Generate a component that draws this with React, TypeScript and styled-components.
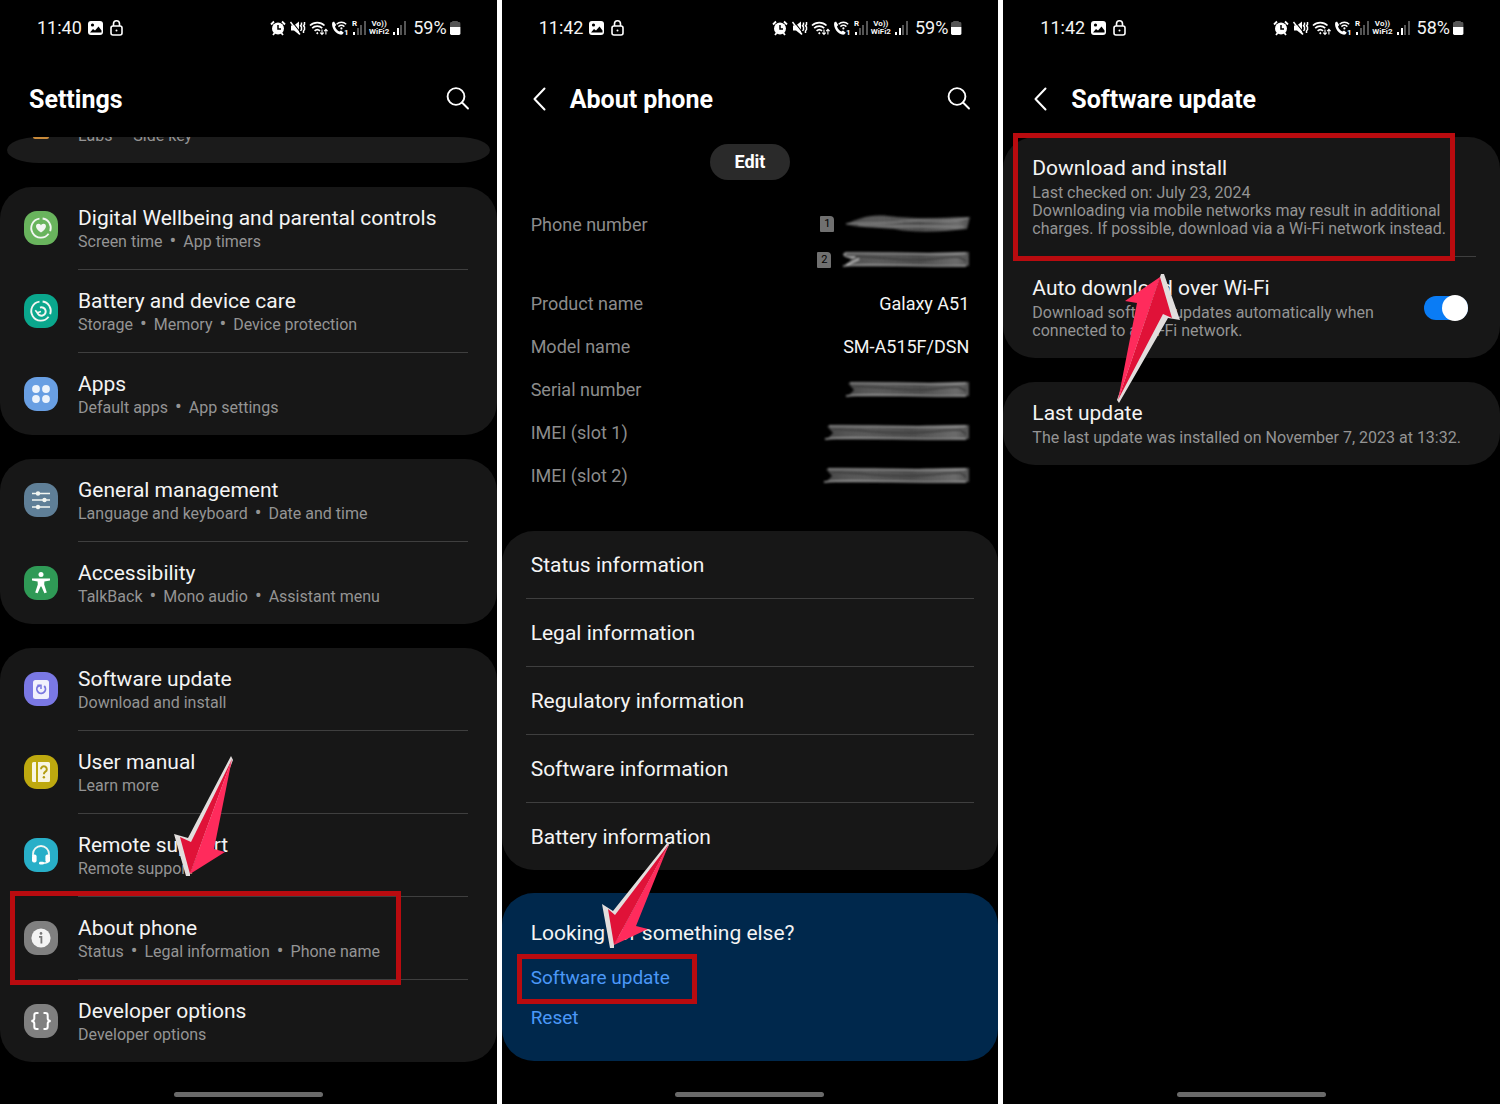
import React from "react";
import styled, { createGlobalStyle } from "styled-components";

const GlobalStyle = createGlobalStyle`
  *, *::before, *::after { box-sizing: border-box; }
  body {
    margin: 0;
    background: #fff;
    font-family: Roboto, "Noto Sans", sans-serif;
    color: #f4f4f4;
  }
  h1, h2, p, dl, dt, dd, ul { margin: 0; padding: 0; font-weight: 400; }
  ul { list-style: none; }
  svg { display: block; flex: none; }
`;

/* ---------- shell ---------- */

const Gallery = styled.div`
  display: grid;
  grid-template-columns: repeat(3, minmax(0, 1fr));
  gap: 5px;
  min-height: 100vh;
`;

const Phone = styled.section`
  display: flex;
  flex-direction: column;
  background: #000;
  min-width: 0;
`;

const Body = styled.main<{ $gap: number }>`
  flex: 1;
  display: flex;
  flex-direction: column;
  gap: ${(p) => p.$gap}px;
`;

const NavBar = styled.footer`
  display: flex;
  justify-content: center;
  padding: 0 0 7px;
`;

const NavPill = styled.span`
  width: 30%;
  height: 5px;
  border-radius: 3px;
  background: #6a6a6a;
`;

/* ---------- status bar ---------- */

const StatusRow = styled.div`
  display: flex;
  align-items: center;
  justify-content: space-between;
  height: 56px;
  padding: 0 35px 0 37px;
`;

const StatusGroup = styled.div<{ $gap: number }>`
  display: flex;
  align-items: center;
  gap: ${(p) => p.$gap}px;
`;

const Clock = styled.time`
  font-size: 18px;
  line-height: 24px;
`;

const Percent = styled.span`
  margin-left: 4px;
  margin-right: -2px;
  font-size: 18px;
  line-height: 24px;
`;

const Carrier = styled.span`
  display: flex;
  flex-direction: column;
  align-items: center;
  font-size: 8px;
  line-height: 8px;
  font-weight: 700;
`;

const Signal = ({ roaming }: { roaming?: boolean }) => (
  <svg width="14" height="16" viewBox="0 0 14 16">
    {roaming && (
      <text x="0" y="6" fontSize="8" fontWeight="700" fill="#fff">R</text>
    )}
    <rect x="1" y="12" width="2" height="3" fill="#fff" />
    <rect x="5" y="8" width="2" height="7" fill={roaming ? "#555" : "#fff"} />
    <rect x="8" y="5" width="2" height="10" fill="#555" />
    <rect x="12" y="1" width="2" height="14" fill="#555" />
  </svg>
);

const StatusBar = ({ time, battery }: { time: string; battery: string }) => (
  <StatusRow>
    <StatusGroup $gap={6}>
      <Clock>{time}</Clock>
      <svg width="16" height="16" viewBox="0 0 16 16">
        <rect x="0" y="1" width="15" height="14" rx="3" fill="#fff" />
        <circle cx="4.5" cy="5" r="1.6" fill="#000" />
        <path d="M2 12.5 L5 9 L7 10.5 L10.5 6.5 L13.5 10.5 V12.5 Z" fill="#000" />
      </svg>
      <svg width="13" height="16" viewBox="0 0 13 16" fill="none" stroke="#fff" strokeWidth="1.6">
        <rect x="1" y="6" width="11" height="9" rx="2" />
        <path d="M3.5 6 V3.8 a3 3 0 0 1 6 0 V6" />
        <circle cx="6.5" cy="10.5" r="1" fill="#fff" stroke="none" />
      </svg>
    </StatusGroup>
    <StatusGroup $gap={3}>
      <svg width="16" height="16" viewBox="0 0 16 16">
        <circle cx="8" cy="8.5" r="6" fill="#fff" />
        <path d="M1 4.5 L4 1.5 M15 4.5 L12 1.5 M3 15 l1.6 -2 M13 15 l-1.6 -2" stroke="#fff" strokeWidth="1.8" />
        <path d="M8 5 V9 H11" stroke="#000" strokeWidth="1.5" fill="none" />
      </svg>
      <svg width="17" height="16" viewBox="0 0 17 16">
        <path d="M2 5.5 H5 L10 1.5 V14.5 L5 10.5 H2 Z" fill="#fff" />
        <path d="M2.500 1 L12 13" stroke="#000" strokeWidth="1.200" />
        <path d="M1.500 2 L11 14.500" stroke="#fff" strokeWidth="1.400" />
        <path d="M12.500 2.500 v2 l-1 1.300 l1 1.300 v2.500 l-1 1.300 M15.500 2 v2.500 l-1 1.300 l1 1.300 v2.500 l-1 1.300 v2" stroke="#fff" strokeWidth="1.500" fill="none" />
      </svg>
      <svg width="19" height="16" viewBox="0 0 19 16" fill="none" stroke="#fff" strokeWidth="1.7">
        <path d="M1 5.5 a10.5 10.5 0 0 1 14.5 0 M3.2 8.2 a7 7 0 0 1 10 0 M5.6 10.8 a4 4 0 0 1 5.4 0" />
        <path d="M8.3 11.8 l1.2 1.4 l-1.2 1.2 l-1.2 -1.2 z" fill="#fff" stroke="none" />
        <path d="M13 9.5 V14 M11.3 12.6 L13 14.4 L14.7 12.6 M16.9 14.5 V9.6 M15.2 11.2 L16.9 9.4 L18.6 11.2" strokeWidth="1.1" />
      </svg>
      <svg width="18" height="16" viewBox="0 0 18 16">
        <path d="M1.2 2.6 L3 1.4 L5.2 5 L4 6.6 C4.8 9 6.4 10.6 8.4 11.6 L10 10.4 L12.8 12.8 L11.2 14.6 C6 15.6 0 8.8 1.2 2.6 Z" fill="#fff" />
        <path d="M5.6 4.2 a7 7 0 0 1 9.6 0 M7.4 6.6 a4.6 4.6 0 0 1 6 0" fill="none" stroke="#fff" strokeWidth="1.4" />
        <circle cx="10.4" cy="8.4" r="1.1" fill="#fff" />
        <text x="13" y="15" fontSize="8" fontWeight="700" fill="#fff">1</text>
      </svg>
      <Signal roaming />
      <Carrier>
        <span>Vo))</span>
        <span>WiFi2</span>
      </Carrier>
      <Signal />
      <Percent>{battery}</Percent>
      <svg width="14" height="16" viewBox="0 0 14 16">
        <path d="M4 2 a1 1 0 0 1 1 -1 h4 a1 1 0 0 1 1 1 h1 a1.4 1.4 0 0 1 1.4 1.4 V7 H2 V3.4 A1.4 1.4 0 0 1 3.400 2 Z" fill="#555" />
        <path d="M2 7 H12.400 V13.600 A1.4 1.4 0 0 1 11 15 H3.400 A1.4 1.4 0 0 1 2 13.600 Z" fill="#fff" />
      </svg>
    </StatusGroup>
  </StatusRow>
);

/* ---------- title bar ---------- */

const TitleBar = styled.header<{ $back?: boolean }>`
  display: flex;
  align-items: center;
  gap: 20px;
  height: 81px;
  padding: 5px 27px 0 ${(p) => (p.$back ? 26 : 29)}px;
`;

const Title = styled.h1`
  flex: 1;
  padding-top: 2px;
  font-size: 25px;
  line-height: 32px;
  font-weight: 700;
  color: #fff;
`;

const IconButton = styled.button`
  display: flex;
  padding: 0;
  border: 0;
  background: none;
  color: #fff;
`;

const Header = ({ title, back, search }: { title: string; back?: boolean; search?: boolean }) => (
  <TitleBar $back={back}>
    {back && (
      <IconButton type="button" aria-label="Back">
        <svg width="22" height="24" viewBox="0 0 22 24" fill="none" stroke="currentColor" strokeWidth="2" strokeLinecap="round" strokeLinejoin="round">
          <path d="M16.500 1.500 L6.500 12 L16.500 22.500" />
        </svg>
      </IconButton>
    )}
    <Title>{title}</Title>
    {search && (
      <IconButton type="button" aria-label="Search">
        <svg width="24" height="24" viewBox="0 0 24 24" fill="none" stroke="currentColor" strokeWidth="1.900" strokeLinecap="round">
          <circle cx="10" cy="9.500" r="8.400" />
          <path d="M16 15.500 L22 21.500" />
        </svg>
      </IconButton>
    )}
  </TitleBar>
);

/* ---------- cards and rows ---------- */

const Card = styled.ul`
  border-radius: 32px;
  background: #171717;
`;

const Rule = styled.li<{ $left: number; $right: number }>`
  height: 1px;
  margin: 0 ${(p) => p.$right}px 0 ${(p) => p.$left}px;
  background: #3f3f3f;
`;

const RowItem = styled.li`
  position: relative;
`;

const SettingLink = styled.a`
  display: flex;
  align-items: center;
  gap: 20px;
  height: 82px;
  padding: 0 24px;
  color: inherit;
  text-decoration: none;
`;

const Texts = styled.span`
  display: flex;
  flex-direction: column;
  padding-top: 2px;
`;

const RowTitle = styled.span`
  font-size: 21px;
  line-height: 26px;
`;

const RowSub = styled.span`
  font-size: 16px;
  line-height: 22px;
  color: #949494;
`;

const Bullet = styled.span`
  margin: 0 7px;
  font-size: 20px;
  line-height: 16px;
`;

const Tile = styled.span<{ $color: string }>`
  display: flex;
  align-items: center;
  justify-content: center;
  flex: none;
  width: 34px;
  height: 34px;
  border-radius: 13px;
  background: ${(p) => p.$color};
`;

const PeekClip = styled.div`
  height: 26px;
  margin: 0 7px;
  padding: 0 17px;
  border-radius: 32px / 13px;
  background: #1b1b1b;
`;

const PeekRow = styled.div`
  display: flex;
  align-items: flex-end;
  gap: 20px;
  height: 10px;
  overflow: hidden;
`;

const PeekDot = styled.span`
  align-self: flex-start;
  width: 16px;
  height: 2px;
  margin: 0 9px;
  border-radius: 0 0 8px 8px;
  background: #c98a3a;
`;

/* ---------- annotations ---------- */

type BoxProps = { $top: number; $left: number; $width: number; $height: number };

const Outline = styled.span<BoxProps>`
  position: absolute;
  z-index: 1;
  top: ${(p) => p.$top}px;
  left: ${(p) => p.$left}px;
  width: ${(p) => p.$width}px;
  height: ${(p) => p.$height}px;
  border: 5px solid #b90b0f;
  pointer-events: none;
`;

const ArrowSvg = styled.svg<{ $top: number; $left: number }>`
  position: absolute;
  z-index: 2;
  top: ${(p) => p.$top}px;
  left: ${(p) => p.$left}px;
  pointer-events: none;
`;

type ArrowProps = {
  top: number;
  left: number;
  width: number;
  height: number;
  edge: string;
  dark: string;
  light: string;
};

const Arrow = ({ top, left, width, height, edge, dark, light }: ArrowProps) => (
  <ArrowSvg $top={top} $left={left} width={width} height={height} viewBox={`0 0 ${width} ${height}`} aria-hidden="true">
    <polygon points={edge} fill="#e2dedd" />
    <polygon points={dark} fill="#e01238" />
    <polygon points={light} fill="#ff2b5c" />
  </ArrowSvg>
);

/* ---------- settings glyphs ---------- */

const Glyph = ({ children }: { children: React.ReactNode }) => (
  <svg width="34" height="34" viewBox="0 0 34 34" fill="none" stroke="#f2f6f2" strokeWidth="1.800" aria-hidden="true">
    {children}
  </svg>
);

const ring = <path d="M15.500 7.600 A9.600 9.600 0 1 0 24.600 22.800 M18.600 7.500 A9.600 9.600 0 0 1 26.200 20.200" />;

const glyphs = {
  wellbeing: (
    <Glyph>
      {ring}
      <path d="M17 21.500 C10.500 17.800 11.200 12.800 14.400 12.800 C16 12.800 16.700 13.800 17 14.400 C17.300 13.800 18 12.800 19.600 12.800 C22.800 12.800 23.500 17.800 17 21.500 Z" fill="#f2f6f2" stroke="none" />
    </Glyph>
  ),
  care: (
    <Glyph>
      {ring}
      <path d="M16 13.600 A4.200 4.200 0 1 1 13.400 18.400" strokeWidth="2" />
      <path d="M11.300 16.200 L13.300 18.800 L17 17.600" strokeWidth="1.600" />
    </Glyph>
  ),
  apps: (
    <Glyph>
      <g fill="#eef4fc" stroke="none">
        <circle cx="12" cy="12" r="3.900" />
        <circle cx="22" cy="12" r="3.900" />
        <circle cx="12" cy="22" r="3.900" />
        <circle cx="22" cy="22" r="3.900" />
      </g>
    </Glyph>
  ),
  general: (
    <Glyph>
      <path d="M8 10.500 H26 M8 17 H26 M8 24 H26" strokeWidth="1.600" />
      <g fill="#f2f6f2" stroke="none">
        <circle cx="14" cy="10.500" r="2.200" />
        <circle cx="20.500" cy="17" r="2.200" />
        <circle cx="14" cy="24" r="2.200" />
      </g>
    </Glyph>
  ),
  access: (
    <Glyph>
      <circle cx="17" cy="8.500" r="2.500" fill="#fff" stroke="none" />
      <path d="M8 12.600 H26 V14.600 L20.400 15.600 L20.200 18.500 L22.800 26.400 L20.400 27.200 L17.400 20.500 H16.600 L13.600 27.200 L11.200 26.400 L13.800 18.500 L13.600 15.600 L8 14.600 Z" fill="#fff" stroke="none" />
    </Glyph>
  ),
  update: (
    <Glyph>
      <rect x="9" y="8" width="16" height="19" rx="2.500" fill="#f1f1fc" stroke="none" />
      <path d="M20.200 14 A4.300 4.300 0 1 1 13.600 14.600 L16 13.600" stroke="#7a78e0" />
      <path d="M13.400 13.200 H17 V17" stroke="#7a78e0" strokeWidth="1.500" />
    </Glyph>
  ),
  manual: (
    <Glyph>
      <path d="M8 8.500 a1.500 1.500 0 0 1 1.500 -1.500 H12 V27 H9.500 A1.500 1.500 0 0 1 8 25.500 Z M14 7 H24.500 A1.500 1.500 0 0 1 26 8.500 V25.500 A1.500 1.500 0 0 1 24.500 27 H14 Z" fill="#f8f5e0" stroke="none" />
      <path d="M17 14.200 a2.900 2.900 0 1 1 4.400 2.500 c-1.200 .7 -1.500 1.200 -1.500 2.500" stroke="#b39d10" strokeWidth="2" />
      <circle cx="19.900" cy="22.200" r="1.200" fill="#b39d10" stroke="none" />
    </Glyph>
  ),
  remote: (
    <Glyph>
      <path d="M9 18 V16 a8 8 0 0 1 16 0 V18 M24.500 22 c0 2 -2 3.200 -5.500 3.200" />
      <rect x="8" y="16.500" width="4.600" height="8" rx="2" fill="#fff" stroke="none" />
      <rect x="21.400" y="16.500" width="4.600" height="8" rx="2" fill="#fff" stroke="none" />
      <rect x="15" y="23.800" width="5" height="2.800" rx="1.400" fill="#fff" stroke="none" />
    </Glyph>
  ),
  about: (
    <Glyph>
      <circle cx="17" cy="17" r="9.600" fill="#f3f3f3" stroke="none" />
      <circle cx="17" cy="12.400" r="1.300" fill="#777" stroke="none" />
      <path d="M15 15.800 H17.400 V22.600" stroke="#777" />
    </Glyph>
  ),
  developer: (
    <Glyph>
      <g stroke="#fff" strokeWidth="2">
        <path d="M14.500 9 H12.500 Q10.300 9 10.300 11.200 V14.500 Q10.300 16.400 7.500 17 Q10.300 17.600 10.300 19.500 V22.800 Q10.300 25 12.500 25 H14.500" />
        <path d="M19.500 9 H21.500 Q23.700 9 23.700 11.200 V14.500 Q23.700 16.400 26.500 17 Q23.700 17.600 23.700 19.500 V22.800 Q23.700 25 21.500 25 H19.500" />
      </g>
    </Glyph>
  ),
};

type Setting = { title: string; sub: string[]; color: string; icon: keyof typeof glyphs; marked?: boolean };

const settingGroups: Setting[][] = [
  [
    { title: "Digital Wellbeing and parental controls", sub: ["Screen time", "App timers"], color: "#69b45d", icon: "wellbeing" },
    { title: "Battery and device care", sub: ["Storage", "Memory", "Device protection"], color: "#0aa78d", icon: "care" },
    { title: "Apps", sub: ["Default apps", "App settings"], color: "#699fe3", icon: "apps" },
  ],
  [
    { title: "General management", sub: ["Language and keyboard", "Date and time"], color: "#5f7f97", icon: "general" },
    { title: "Accessibility", sub: ["TalkBack", "Mono audio", "Assistant menu"], color: "#2f9a56", icon: "access" },
  ],
  [
    { title: "Software update", sub: ["Download and install"], color: "#7a78e4", icon: "update" },
    { title: "User manual", sub: ["Learn more"], color: "#bea90f", icon: "manual" },
    { title: "Remote support", sub: ["Remote support"], color: "#28afc8", icon: "remote" },
    { title: "About phone", sub: ["Status", "Legal information", "Phone name"], color: "#808080", icon: "about", marked: true },
    { title: "Developer options", sub: ["Developer options"], color: "#808080", icon: "developer" },
  ],
];

const Joined = ({ parts }: { parts: string[] }) => (
  <>
    {parts.map((part, i) => (
      <React.Fragment key={part}>
        {i > 0 && <Bullet>•</Bullet>}
        {part}
      </React.Fragment>
    ))}
  </>
);

const SettingsScreen = () => (
  <Phone>
    <StatusBar time="11:40" battery="59%" />
    <Header title="Settings" search />
    <Body $gap={24}>
      <PeekClip>
        <PeekRow>
          <PeekDot />
          <RowSub><Joined parts={["Labs", "Side key"]} /></RowSub>
        </PeekRow>
      </PeekClip>
      {settingGroups.map((group) => (
        <Card key={group[0].title}>
          {group.map((s, i) => (
            <React.Fragment key={s.title}>
              {i > 0 && <Rule role="presentation" $left={78} $right={29} />}
              <RowItem>
                <SettingLink href="#">
                  <Tile $color={s.color}>{glyphs[s.icon]}</Tile>
                  <Texts>
                    <RowTitle>{s.title}</RowTitle>
                    <RowSub><Joined parts={s.sub} /></RowSub>
                  </Texts>
                </SettingLink>
                {s.marked && (
                  <>
                    <Outline $top={-6} $left={10} $width={391} $height={94} />
                    <Arrow
                      top={-141}
                      left={174}
                      width={60}
                      height={120}
                      edge="57,0 59,4 16,118 16,120 12,120 0,78 14,82"
                      dark="58,3 16,118 6,81 17,86"
                      light="58,3 40,93 51,96 16,118"
                    />
                  </>
                )}
              </RowItem>
            </React.Fragment>
          ))}
        </Card>
      ))}
    </Body>
    <NavBar><NavPill /></NavBar>
  </Phone>
);

/* ---------- about phone ---------- */

const EditButton = styled.button`
  align-self: center;
  height: 36px;
  margin: 7px 0 23px;
  padding: 0 25px;
  border: 0;
  border-radius: 18px;
  background: #2a2a2a;
  color: #fff;
  font: 700 18px/24px Roboto, "Noto Sans", sans-serif;
`;

const Facts = styled.dl`
  padding: 0 29px;
  margin-bottom: 34px;
`;

const Fact = styled.div`
  display: flex;
  justify-content: space-between;
  font-size: 18px;
  line-height: 43px;
`;

const FactName = styled.dt`
  color: #8c8c8c;
`;

const FactValue = styled.dd`
  display: flex;
  flex-direction: column;
  align-items: flex-end;
`;

const SimLines = styled(FactValue)`
  padding: 3px 0 4px;
`;

const Hidden = styled.span<{ $height: number }>`
  display: flex;
  align-items: center;
  gap: 10px;
  height: ${(p) => p.$height}px;
  margin-right: -3px;
`;

const Smudge = ({ width, shape = 0 }: { width: number; shape?: number }) => {
  const w = width;
  const id = `smudge-${width}-${shape}`;
  const bodies = [
    `M2 11 C14 6 24 1 44 3 C70 6 95 5 ${w - 2} 4 L${w - 5} 16 C95 19 70 20 50 16 C30 14 12 15 2 11 Z`,
    `M4 4 C40 3 80 5 ${w - 3} 3 L${w - 3} 17 C90 16 50 18 4 17 L10 11 Z`,
  ];
  return (
    <svg width={w} height="22" viewBox={`0 0 ${w} 22`} aria-hidden="true">
      <defs>
        <linearGradient id={id} x1="0" x2="1" y1="0" y2="0">
          <stop offset="0" stopColor="#8a8a8a" stopOpacity="0.500" />
          <stop offset="0.300" stopColor="#5a5a5a" />
          <stop offset="0.600" stopColor="#4e4e4e" />
          <stop offset="0.900" stopColor="#6c6c6c" />
          <stop offset="1" stopColor="#505050" />
        </linearGradient>
        <filter id={`${id}-soft`} x="-5%" y="-20%" width="110%" height="140%">
          <feGaussianBlur stdDeviation="0.900" />
        </filter>
      </defs>
      <g filter={`url(#${id}-soft)`}>
        <path d={bodies[shape === 0 ? 0 : 1]} fill={`url(#${id})`} />
        {shape === 0 ? (
          <path d={`M2 11 C20 8 32 13 60 8 C85 5 100 12 ${w - 4} 5 M14 12 C40 15 70 12 ${w - 8} 14`} fill="none" stroke="#8c8c8c" strokeWidth="1.200" />
        ) : (
          <>
            <path d={`M6 4 C40 3 70 6 ${w - 6} 4 M2 17 C30 14 60 18 ${w - 6} 17`} fill="none" stroke="#a2a2a2" strokeWidth="1.300" />
            <path d={`M8 8 C40 6 60 14 ${w * 0.7} 10 S${w - 14} 8 ${w - 6} 12`} fill="none" stroke="#3c3c3c" strokeWidth="1.800" />
            {shape === 2 && <path d="M14 8 C4 9 0 5 6 4 M5 16 L18 10" fill="none" stroke="#ccc" strokeWidth="1.500" />}
          </>
        )}
      </g>
    </svg>
  );
};

const SimBadge = styled.span`
  display: flex;
  align-items: center;
  justify-content: center;
  width: 14px;
  height: 16px;
  border-radius: 1px 4px 1px 1px;
  background: #707070;
  color: #000;
  font-size: 11px;
  line-height: 16px;
`;

const InfoLink = styled.a`
  display: flex;
  align-items: center;
  height: 67px;
  padding: 0 29px;
  font-size: 21px;
  line-height: 26px;
  color: inherit;
  text-decoration: none;
`;

const HintCard = styled.aside`
  display: flex;
  flex-direction: column;
  align-items: flex-start;
  gap: 14px;
  margin-top: 23px;
  padding: 27px 29px 30px;
  border-radius: 32px;
  background: #00284c;
`;

const HintTitle = styled.h2`
  && { padding-bottom: 5px; }
  font-size: 21px;
  line-height: 26px;
`;

const HintLink = styled.a`
  position: relative;
  font-size: 19px;
  line-height: 26px;
  color: #4b98f8;
  text-decoration: none;
`;

const infoLinks = [
  "Status information",
  "Legal information",
  "Regulatory information",
  "Software information",
  "Battery information",
];

const AboutScreen = () => (
  <Phone>
    <StatusBar time="11:42" battery="59%" />
    <Header title="About phone" back search />
    <Body $gap={0}>
      <EditButton type="button">Edit</EditButton>
      <Facts>
        <Fact>
          <FactName>Phone number</FactName>
          <SimLines>
            <Hidden $height={36}><SimBadge>1</SimBadge><Smudge width={128} /></Hidden>
            <Hidden $height={36}><SimBadge>2</SimBadge><Smudge width={131} shape={2} /></Hidden>
          </SimLines>
        </Fact>
        <Fact><FactName>Product name</FactName><FactValue>Galaxy A51</FactValue></Fact>
        <Fact><FactName>Model name</FactName><FactValue>SM-A515F/DSN</FactValue></Fact>
        <Fact><FactName>Serial number</FactName><FactValue><Hidden $height={43}><Smudge width={128} shape={1} /></Hidden></FactValue></Fact>
        <Fact><FactName>IMEI (slot 1)</FactName><FactValue><Hidden $height={43}><Smudge width={149} shape={1} /></Hidden></FactValue></Fact>
        <Fact><FactName>IMEI (slot 2)</FactName><FactValue><Hidden $height={43}><Smudge width={150} shape={1} /></Hidden></FactValue></Fact>
      </Facts>
      <Card>
        {infoLinks.map((label, i) => (
          <React.Fragment key={label}>
            {i > 0 && <Rule role="presentation" $left={24} $right={24} />}
            <RowItem><InfoLink href="#">{label}</InfoLink></RowItem>
          </React.Fragment>
        ))}
      </Card>
      <HintCard>
        <HintTitle>Looking for something else?</HintTitle>
        <HintLink href="#">
          Software update
          <Outline $top={-11} $left={-14} $width={180} $height={50} />
          <Arrow
            top={-123}
            left={71}
            width={68}
            height={106}
            edge="66,0 67,3 12,103 12,106 8,106 0,62 11,69"
            dark="67,2 12,103 6,67 13,73"
            light="67,2 34,84 46,87 12,103"
          />
        </HintLink>
        <HintLink href="#">Reset</HintLink>
      </HintCard>
    </Body>
    <NavBar><NavPill /></NavBar>
  </Phone>
);

/* ---------- software update ---------- */

const UpdateRow = styled.li`
  position: relative;
  display: flex;
  align-items: center;
  justify-content: space-between;
  gap: 24px;
  padding: 18px 29px;
`;

const UpdateTexts = styled.label`
  display: flex;
  flex-direction: column;
  gap: 3px;
  white-space: nowrap;
`;

const Note = styled.span`
  font-size: 16px;
  line-height: 18px;
  color: #949494;
`;

const Switch = styled.input`
  appearance: none;
  display: flex;
  align-items: center;
  justify-content: flex-end;
  flex: none;
  width: 44px;
  height: 24px;
  margin: 0 3px 0 0;
  border-radius: 12px;
  background: #0a7cf5;
  &::before {
    content: "";
    width: 26px;
    height: 26px;
    border-radius: 50%;
    background: #fff;
  }
`;

const UpdateScreen = () => (
  <Phone>
    <StatusBar time="11:42" battery="58%" />
    <Header title="Software update" back />
    <Body $gap={24}>
      <Card>
        <UpdateRow>
          <UpdateTexts as="div">
            <RowTitle>Download and install</RowTitle>
            <Note>
              Last checked on: July 23, 2024
              <br />
              Downloading via mobile networks may result in additional
              <br />
              charges. If possible, download via a Wi-Fi network instead.
            </Note>
          </UpdateTexts>
          <Outline $top={-4} $left={10} $width={442} $height={128} />
        </UpdateRow>
        <Rule role="presentation" $left={24} $right={24} />
        <UpdateRow>
          <UpdateTexts htmlFor="auto-download">
            <RowTitle>Auto download over Wi-Fi</RowTitle>
            <Note>
              Download software updates automatically when
              <br />
              connected to a Wi-Fi network.
            </Note>
          </UpdateTexts>
          <Switch id="auto-download" type="checkbox" role="switch" defaultChecked />
          <Arrow
            top={17}
            left={114}
            width={64}
            height={130}
            edge="44,0 47,0 63,46 51,44 2,129 0,126 43,3"
            dark="43,3 55,44 46,40 1,126"
            light="43,3 8,27 20,29 1,126"
          />
        </UpdateRow>
      </Card>
      <Card>
        <UpdateRow>
          <UpdateTexts as="div">
            <RowTitle>Last update</RowTitle>
            <Note>The last update was installed on November 7, 2023 at 13:32.</Note>
          </UpdateTexts>
        </UpdateRow>
      </Card>
    </Body>
    <NavBar><NavPill /></NavBar>
  </Phone>
);

export default function App() {
  return (
    <>
      <GlobalStyle />
      <Gallery>
        <SettingsScreen />
        <AboutScreen />
        <UpdateScreen />
      </Gallery>
    </>
  );
}
